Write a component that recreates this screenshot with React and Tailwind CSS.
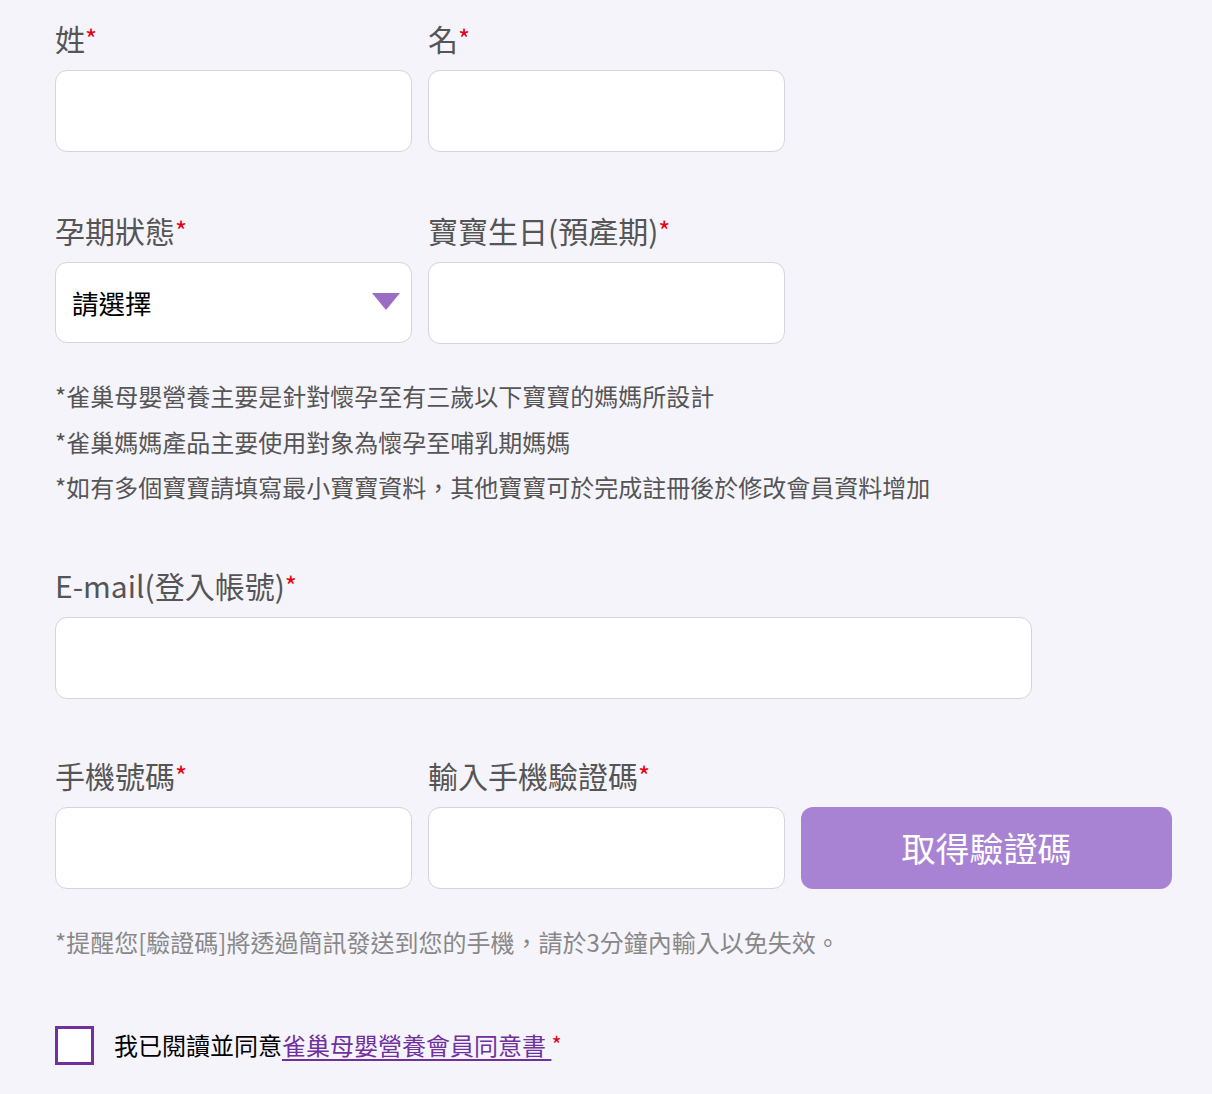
const FONT = "font-['Noto_Sans_CJK_TC','Noto_Sans',sans-serif]";

function Label({ children, className = "" }) {
  return (
    <label className={`block text-[30px] leading-[36px] text-[#555] mb-[14px] ${className}`}>
      {children}
      <span className="text-[#e60012] text-[26px] align-top">*</span>
    </label>
  );
}

function Field({ label, className = "w-[357px]" }) {
  return (
    <div className={className}>
      <Label>{label}</Label>
      <input
        type="text"
        className="block w-full h-[82px] rounded-[12px] border border-[#d6d3dc] bg-white px-4 text-[24px] outline-none"
      />
    </div>
  );
}

export default function App() {
  return (
    <div className={`min-h-[1094px] bg-[#f6f4fb] ${FONT}`}>
      <div className="pl-[55px] pt-[20px]">
        <div className="flex gap-[16px]">
          <Field label="姓" />
          <Field label="名" />
        </div>

        <div className="flex gap-[16px] mt-[60px]">
          <div className="w-[357px]">
            <Label>孕期狀態</Label>
            <div className="flex items-center justify-between h-[81px] rounded-[12px] border border-[#d6d3dc] bg-white pl-[16px] pr-[11px]">
              <span className="text-[26.5px] text-black">請選擇</span>
              <svg width="28" height="17" viewBox="0 0 28 17" className="-mt-[2px]">
                <path d="M0 0 L28 0 L14 17 Z" fill="#9b6cc4" />
              </svg>
            </div>
          </div>
          <Field label="寶寶生日(預產期)" />
        </div>

        <div className="mt-[29px] text-[24px] leading-[45.5px] text-[#555]">
          <p>*雀巢母嬰營養主要是針對懷孕至有三歲以下寶寶的媽媽所設計</p>
          <p>*雀巢媽媽產品主要使用對象為懷孕至哺乳期媽媽</p>
          <p>*如有多個寶寶請填寫最小寶寶資料，其他寶寶可於完成註冊後於修改會員資料增加</p>
        </div>

        <div className="mt-[57px]">
          <Field label="E-mail(登入帳號)" className="w-[977px]" />
        </div>

        <div className="flex gap-[16px] mt-[58px] items-end">
          <Field label="手機號碼" />
          <Field label="輸入手機驗證碼" />
          <button
            type="button"
            className="w-[371px] h-[82px] rounded-[12px] bg-[#a883d3] text-white text-[34px]"
          >
            取得驗證碼
          </button>
        </div>

        <p className="mt-[38px] text-[24px] leading-[30px] text-[#888]">
          *提醒您[驗證碼]將透過簡訊發送到您的手機，請於3分鐘內輸入以免失效。
        </p>

        <div className="flex items-center mt-[69px]">
          <span className="w-[39px] h-[39px] border-[3px] border-[#7030a0] bg-white" />
          <span className="ml-[20px] text-[24px] text-black">
            我已閱讀並同意
            <a href="#" className="text-[#7030a0] underline underline-offset-4">
              雀巢母嬰營養會員同意書{" "}
            </a>
            <span className="text-[#e60012] text-[22px] align-top">*</span>
          </span>
        </div>
      </div>
    </div>
  );
}
